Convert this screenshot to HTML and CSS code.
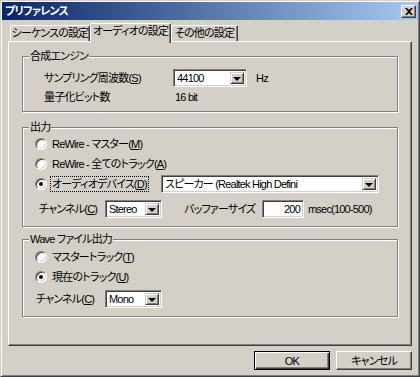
FILE: index.html
```html
<!DOCTYPE html>
<html lang="ja">

<head>
  <meta charset="utf-8" />
  <title>プリファレンス</title>
  <link rel="stylesheet" href="styles.css">
</head>

<body>
  <div class="window">
    <div class="titlebar">
      <span class="title">プリファレンス</span>
      <span class="close_btn">
        <svg width="8" height="7" viewBox="0 0 8 7"><path d="M0 0h2l2 2 2-2h2L5 3.5 8 7H6L4 5 2 7H0l3-3.5z" fill="#000"/></svg>
      </span>
    </div>

    <div class="client">
      <!-- タブ -->
      <div class="tabs">
        <div class="tab tab_seq">シーケンスの設定</div>
        <div class="tab tab_audio active">オーディオの設定</div>
        <div class="tab tab_other">その他の設定</div>
      </div>

      <div class="panel">
        <!-- 合成エンジン -->
        <div class="group group_engine">
          <span class="group_title">合成エンジン</span>
          <div class="row row_rate">
            <span class="rate_label">サンプリング周波数(<u>S</u>)</span>
            <div class="combo combo_rate">
              <span class="combo_text">44100</span>
              <span class="combo_btn"><i class="arrow"></i></span>
            </div>
            <span class="unit">Hz</span>
          </div>
          <div class="row row_bits">
            <span class="rate_label">量子化ビット数</span>
            <span class="bits_value">16 bit</span>
          </div>
        </div>

        <!-- 出力 -->
        <div class="group group_output">
          <span class="group_title">出力</span>
          <div class="row radio_row">
            <span class="radio"></span>
            <span class="radio_text">ReWire - マスター(<u>M</u>)</span>
          </div>
          <div class="row radio_row">
            <span class="radio"></span>
            <span class="radio_text">ReWire - 全てのトラック(<u>A</u>)</span>
          </div>
          <div class="row radio_row">
            <div class="device_choice">
              <span class="radio checked"></span>
              <span class="radio_text focused">オーディオデバイス(<u>D</u>)</span>
            </div>
            <div class="combo combo_device">
              <span class="combo_text">スピーカー (Realtek High Defini</span>
              <span class="combo_btn"><i class="arrow"></i></span>
            </div>
          </div>
          <div class="row channel_row">
            <span class="channel_label">チャンネル(<u>C</u>)</span>
            <div class="combo combo_channel">
              <span class="combo_text">Stereo</span>
              <span class="combo_btn"><i class="arrow"></i></span>
            </div>
            <span class="buffer_label">バッファーサイズ</span>
            <div class="edit_box">200</div>
            <span class="unit_msec">msec(100-500)</span>
          </div>
        </div>

        <!-- Wave ファイル出力 -->
        <div class="group group_wave">
          <span class="group_title">Wave ファイル出力</span>
          <div class="row radio_row">
            <span class="radio"></span>
            <span class="radio_text">マスタートラック(<u>T</u>)</span>
          </div>
          <div class="row radio_row">
            <span class="radio checked"></span>
            <span class="radio_text">現在のトラック(<u>U</u>)</span>
          </div>
          <div class="row channel_row wave_channel">
            <span class="channel_label">チャンネル(<u>C</u>)</span>
            <div class="combo combo_channel">
              <span class="combo_text">Mono</span>
              <span class="combo_btn"><i class="arrow"></i></span>
            </div>
          </div>
        </div>
      </div>

      <div class="buttons">
        <button class="btn default_btn">OK</button>
        <button class="btn">キャンセル</button>
      </div>
    </div>
  </div>
</body>

</html>
```

FILE: styles.css
```css
body {
  margin: 0;
  background-color: #d4d0c8;
  font-family: "Liberation Sans", "Noto Sans CJK JP", sans-serif;
  font-size: 11px;
  letter-spacing: -0.8px;
  font-feature-settings: "palt";
  color: #000;
}

u {
  text-decoration: underline;
}

.window {
  box-sizing: border-box;
  width: 420px;
  height: 377px;
  padding: 1px;
  border: 1px solid;
  border-color: #d4d0c8 #404040 #404040 #d4d0c8;
  box-shadow: inset 1px 1px 0 #fff, inset -1px -1px 0 #808080;
  display: flex;
  flex-direction: column;
}

/* タイトルバー */
.titlebar {
  height: 18px;
  display: flex;
  align-items: center;
  justify-content: space-between;
  padding: 0 2px 0 3px;
  background: linear-gradient(to right, #0a246a, #a6caf0);
  color: #fff;
  font-weight: bold;
  line-height: 16px;
}

.close_btn {
  box-sizing: border-box;
  width: 15px;
  height: 13px;
  display: flex;
  align-items: center;
  justify-content: center;
  background-color: #d4d0c8;
  border: 1px solid;
  border-color: #fff #404040 #404040 #fff;
  box-shadow: inset -1px -1px 0 #808080;
}

.client {
  flex: 1;
  padding: 3px 6px 0 6px;
}

/* タブ */
.tabs {
  height: 18px;
  display: flex;
  align-items: flex-end;
  padding-left: 2px;
}

.tab {
  box-sizing: border-box;
  height: 16px;
  line-height: 15px;
  text-align: center;
  border: 1px solid;
  border-bottom: none;
  border-color: #fff #404040 transparent #fff;
  border-radius: 2px 2px 0 0;
  box-shadow: inset -1px 0 0 #808080;
  white-space: nowrap;
}

.tab_seq {
  width: 80px;
}

.tab_audio {
  width: 81px;
}

.tab_other {
  width: 67px;
}

.tab.active {
  position: relative;
  z-index: 1;
  height: 20px;
  margin-bottom: -2px;
  padding-bottom: 4px;
  line-height: 15px;
  background-color: #d4d0c8;
}

.panel {
  box-sizing: border-box;
  height: 305px;
  padding: 14px 13px 0 13px;
  border: 1px solid;
  border-color: #fff #404040 #404040 #fff;
  box-shadow: inset -1px -1px 0 #808080;
}

/* グループボックス */
.group {
  position: relative;
  box-sizing: border-box;
  border: 1px solid #808080;
  box-shadow: 1px 1px 0 #fff, inset 1px 1px 0 #fff;
}

.group_title {
  position: absolute;
  top: -8px;
  left: 6px;
  padding: 0 1px;
  line-height: 15px;
  background-color: #d4d0c8;
  white-space: nowrap;
}

.group_engine {
  height: 56px;
  padding-top: 12px;
}

.group_output {
  height: 100px;
  margin-top: 15px;
  padding-top: 7px;
}

.group_wave {
  height: 78px;
  margin-top: 12px;
  padding-top: 8px;
}

.row {
  height: 18px;
  display: flex;
  align-items: center;
  line-height: 14px;
  white-space: nowrap;
}

.row + .row {
  margin-top: 2px;
}

.row_rate,
.row_bits {
  padding-left: 21px;
}

.row_bits {
  margin-top: 1px !important;
}

.rate_label {
  width: 129px;
}

.unit {
  margin-left: 9px;
}

.bits_value {
  padding-left: 2px;
}

/* ラジオボタン */
.radio_row {
  padding-left: 12px;
}

.radio {
  box-sizing: border-box;
  position: relative;
  width: 12px;
  height: 12px;
  flex: none;
  border-radius: 50%;
  border: 1px solid;
  border-color: #808080 #fff #fff #808080;
  box-shadow: inset 1px 1px 0 #404040, inset -1px -1px 0 #d4d0c8;
  background-color: #fff;
}

.radio.checked::after {
  content: "";
  position: absolute;
  left: 3px;
  top: 3px;
  width: 4px;
  height: 4px;
  border-radius: 50%;
  background-color: #000;
}

.radio_text {
  margin-left: 4px;
  padding: 0 1px;
}

.focused {
  outline: 1px dotted #000;
  outline-offset: 0;
}

.device_choice {
  width: 126px;
  display: flex;
  align-items: center;
}

/* コンボボックス */
.combo {
  box-sizing: border-box;
  height: 18px;
  display: flex;
  padding: 2px;
  border: 1px solid;
  border-color: #808080 #fff #fff #808080;
  box-shadow: inset 1px 1px 0 #404040, inset -1px -1px 0 #d4d0c8;
  background-color: #fff;
}

.combo_text {
  flex: 1;
  padding-left: 1px;
  line-height: 13px;
  overflow: hidden;
}

.combo_btn {
  box-sizing: border-box;
  width: 14px;
  flex: none;
  display: flex;
  align-items: center;
  justify-content: center;
  background-color: #d4d0c8;
  border: 1px solid;
  border-color: #d4d0c8 #404040 #404040 #d4d0c8;
  box-shadow: inset 1px 1px 0 #fff, inset -1px -1px 0 #808080;
}

.arrow {
  width: 0;
  height: 0;
  border-left: 4px solid transparent;
  border-right: 4px solid transparent;
  border-top: 4px solid #000;
  margin-top: 1px;
}

.combo_rate {
  width: 74px;
}

.combo_device {
  width: 218px;
}

.combo_channel {
  width: 57px;
}

.channel_row {
  margin-top: 7px !important;
  padding-left: 16px;
}

.channel_label {
  width: 66px;
}

.wave_channel {
  margin-top: 4px !important;
  padding-left: 13px;
}

.wave_channel .channel_label {
  width: 69px;
}

.buffer_label {
  width: 78px;
  margin-left: 22px;
}

.edit_box {
  box-sizing: border-box;
  width: 42px;
  height: 18px;
  padding: 2px 3px 0 0;
  text-align: right;
  line-height: 13px;
  border: 1px solid;
  border-color: #808080 #fff #fff #808080;
  box-shadow: inset 1px 1px 0 #404040, inset -1px -1px 0 #d4d0c8;
  background-color: #fff;
}

.unit_msec {
  margin-left: 4px;
}

/* ボタン */
.buttons {
  display: flex;
  justify-content: flex-end;
  gap: 6px;
  margin-top: 5px;
}

.btn {
  box-sizing: border-box;
  width: 76px;
  height: 19px;
  padding: 0;
  font: inherit;
  letter-spacing: inherit;
  line-height: 14px;
  background-color: #d4d0c8;
  border: 1px solid;
  border-color: #fff #404040 #404040 #fff;
  box-shadow: inset -1px -1px 0 #808080;
}

.default_btn {
  border: 1px solid #000;
  box-shadow: inset 1px 1px 0 #fff, inset -1px -1px 0 #404040, inset -2px -2px 0 #808080;
}
```
